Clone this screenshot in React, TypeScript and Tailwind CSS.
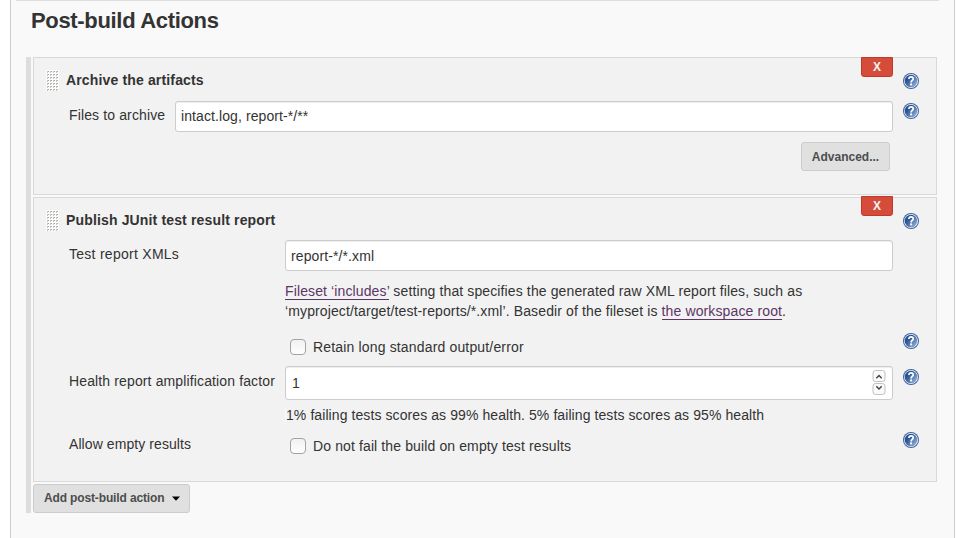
import type { ReactNode } from "react";

function HelpIcon() {
  return (
    <svg className="block size-4 shrink-0" viewBox="0 0 16 16" aria-label="Help">
      <defs>
        <linearGradient id="help-fill" x1="0" y1="0.1" x2="1" y2="0.9">
          <stop offset="0.3" stopColor="#2a5493" />
          <stop offset="1" stopColor="#9db9df" />
        </linearGradient>
      </defs>
      <circle cx="8" cy="8" r="8" fill="#3c629c" />
      <circle cx="8" cy="8" r="7" fill="#f4f7fb" />
      <circle cx="8" cy="8" r="6.3" fill="url(#help-fill)" />
      <path
        d="M5.9 5.9C5.9 4.5 6.8 3.8 8.1 3.8C9.4 3.8 10.2 4.6 10.2 5.7C10.2 7.3 8.1 7.4 8.1 9.4"
        fill="none"
        stroke="#fff"
        strokeWidth="1.7"
      />
      <rect x="7.1" y="10.4" width="2" height="2" fill="#fff" />
    </svg>
  );
}

function DragHandle({ rows }: { rows: number }) {
  const dots: ReactNode[] = [];
  for (let r = 0; r < rows; r++) {
    for (let c = 0; c < 4; c++) {
      dots.push(
        <path key={`${r}-${c}`} d={`M${1 + c * 3} ${1 + r * 3}h2v1h-1v1h-1z`} fill="#c4c4c0" />,
        <path key={`${r}-${c}-d`} d={`M${2 + c * 3} ${1 + r * 3}h1v1h-1z`} fill="#a9a9a4" />,
      );
    }
  }
  return (
    <svg className="block h-[21px] w-[13px] shrink-0" viewBox="0 0 13 21" shapeRendering="crispEdges">
      <rect width="13" height={rows * 3} fill="#fcfcfc" />
      {dots}
    </svg>
  );
}

function DeleteButton({ className }: { className: string }) {
  return (
    <button
      className={`absolute left-[827px] flex h-5 w-8 items-center justify-center rounded-b-[3px] border border-[#c03a2b] bg-[#d54c3b] text-[12px] leading-none font-bold text-[#f4f4f4] ${className}`}
    >
      X
    </button>
  );
}

function CardHeader({ title, className }: { title: string; className: string }) {
  return (
    <div className={`flex items-start pl-3 ${className}`}>
      <DragHandle rows={7} />
      <h2 className="ml-[7px] flex-1 text-[14px] leading-5 font-bold tracking-[0.15px]">{title}</h2>
      <div className="mt-[3px] mr-[17px]">
        <HelpIcon />
      </div>
    </div>
  );
}

const field =
  "block rounded-[3px] border border-[#ccc] bg-white text-[14px] text-[#333] shadow-[inset_0_1px_1px_rgba(0,0,0,0.075)] outline-none";
const checkbox =
  "block size-4 shrink-0 appearance-none rounded-[4px] border border-[#a3a3a3] bg-linear-to-b from-[#f1f1f1] to-white";
const link = "border-b border-[#5c3566] text-[#5c3566]";

export default function App() {
  return (
    <div className="h-[538px] w-[974px] overflow-hidden bg-white pl-[10px] font-['Liberation_Sans',Arial,sans-serif] text-[14px] text-[#333]">
      <main className="h-full w-[945px] border-x border-[#ccc] bg-[#f9f9f9]">
        <div className="ml-[5px] h-px w-[923px] bg-[#ddd]" />
        <h1 className="ml-5 h-14 pt-[7px] text-[22px] leading-[26px] font-bold tracking-[-0.33px]">
          Post-build Actions
        </h1>

        <div className="ml-[15px] flex h-[456px] flex-col items-start gap-0.5 border-l-[5px] border-[#ddd] pl-0.5">
          <section className="relative h-[138px] w-[904px] shrink-0 border border-[#d9d9d9] bg-[#f2f2f2]">
            <DeleteButton className="-top-px" />
            <CardHeader title="Archive the artifacts" className="h-[43px] pt-3" />
            <div className="flex h-[31px] items-start pl-[35px]">
              <label className="w-[106px] pt-1 leading-5 tracking-[0.13px]">Files to archive</label>
              <input
                className={`${field} h-[31px] w-[718px] px-[5px] pb-0.5 tracking-[0.09px]`}
                defaultValue="intact.log, report-*/**"
              />
              <div className="mt-0.5 ml-[10px]">
                <HelpIcon />
              </div>
            </div>
            <button className="mt-[10px] ml-[767px] block h-[29px] w-[89px] rounded-[3px] border border-[#ccc] bg-[#e0e0e0] text-[12px] font-bold text-[#4d4d4d]">
              Advanced...
            </button>
          </section>

          <section className="relative h-[285px] w-[904px] shrink-0 border border-[#d9d9d9] bg-[#f2f2f2]">
            <DeleteButton className="-top-0.5" />
            <CardHeader title="Publish JUnit test result report" className="h-[42px] pt-3" />
            <div className="flex h-[31px] items-start pl-[35px]">
              <label className="w-[216px] pt-1 leading-5 tracking-[0.27px]">Test report XMLs</label>
              <input
                className={`${field} h-[31px] w-[608px] px-[5px] tracking-[0.11px]`}
                defaultValue="report-*/*.xml"
              />
            </div>
            <p className="mt-[10px] ml-[251px] h-[50px] w-[580px] leading-5 tracking-[0.12px]">
              <a className={link}>Fileset ‘includes’</a> setting that specifies the generated raw XML report files, such as
              <br />
              ‘myproject/target/test-reports/*.xml’. Basedir of the fileset is <a className={link}>the workspace root</a>.
            </p>
            <div className="flex h-[35px] items-start pl-[256px]">
              <input type="checkbox" className={`${checkbox} mt-[8px]`} />
              <label className="ml-[7px] w-[590px] pt-[6px] leading-5 tracking-[0.16px]">
                Retain long standard output/error
              </label>
              <div className="mt-0.5">
                <HelpIcon />
              </div>
            </div>
            <div className="flex h-[34px] items-start pl-[35px]">
              <label className="w-[216px] pt-[5px] leading-5 tracking-[0.13px] whitespace-nowrap">
                Health report amplification factor
              </label>
              <div className={`${field} flex h-[34px] w-[608px] items-center justify-between pr-1.5 pl-1.5`}>
                <span>1</span>
                <svg className="block h-[26px] w-[14px]" viewBox="0 0 14 26">
                  <rect x="1" y="0.5" width="12" height="11" rx="2.5" fill="#fafafa" stroke="#c0c0c0" />
                  <rect x="1" y="13.5" width="12" height="11" rx="2.5" fill="#fafafa" stroke="#c0c0c0" />
                  <path d="M4.3 8.2 7 5.5 9.7 8.2M4.3 16.3 7 19 9.7 16.3" fill="none" stroke="#444" strokeWidth="1.5" />
                </svg>
              </div>
              <div className="mt-[3px] ml-[10px]">
                <HelpIcon />
              </div>
            </div>
            <p className="mt-[5px] ml-[251px] h-[27px] leading-5 tracking-[0.085px]">
              <span className="border-l border-[#fafafa]">1% failing tests scores as 99% health. 5% failing tests scores as 95% health</span>
            </p>
            <div className="flex items-start pl-[35px]">
              <label className="w-[221px] pt-[2px] leading-5 tracking-[0.08px]">Allow empty results</label>
              <input type="checkbox" className={`${checkbox} mt-[6px]`} />
              <label className="ml-[7px] w-[590px] pt-1 leading-5 tracking-[0.12px]">
                Do not fail the build on empty test results
              </label>
              <div>
                <HelpIcon />
              </div>
            </div>
          </section>

          <button className="flex h-[29px] w-[157px] shrink-0 items-center rounded-[3px] border border-[#ccc] bg-[#e0e0e0] pl-[10px] text-[12px] font-bold text-[#4d4d4d]">
            <span className="pb-0.5 tracking-[-0.14px]">Add post-build action</span>
            <svg className="ml-2 h-[5px] w-2" viewBox="0 0 8 5">
              <path d="M0 0.5h8L4 4.8z" fill="#000" />
            </svg>
          </button>
        </div>
      </main>
    </div>
  );
}
